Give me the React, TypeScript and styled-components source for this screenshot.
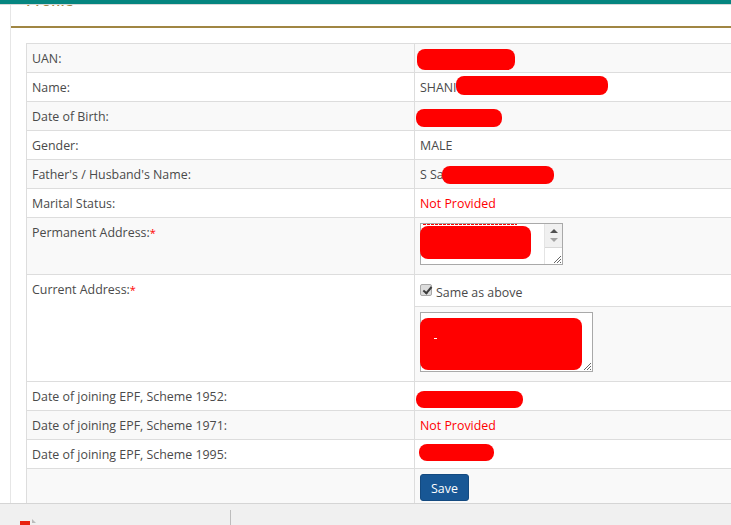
import React from "react";
import styled, { createGlobalStyle } from "styled-components";

const Global = createGlobalStyle`
  html, body { margin: 0; padding: 0; height: 100%; overflow: hidden; background: #fff; }
  body { font-family: "Open Sans", "Liberation Sans", sans-serif; font-size: 12.4px; color: #4a4a4a; }
`;
const Page = styled.div`
  height: 525px; width: 731px; display: flex; flex-direction: column; overflow: hidden;
`;
const TopBar = styled.div`
  height: 4px; flex: none; background: #058580; border-bottom: 1px solid #d8d8d8;
`;
const Main = styled.main`
  flex: 1; min-height: 0; overflow: hidden; padding-left: 10px;
`;
const Panel = styled.section`
  border-left: 1px solid #e6e6e6; height: 600px;
`;
const Heading = styled.h3`
  margin: -17px 0 0; padding-left: 15px; height: 38px; line-height: 24px;
  font-size: 15px; font-weight: 600; color: #a08643;
  border-bottom: 2px solid #a08643;
`;
const TableWrap = styled.div`
  padding: 15px 0 0 15px;
`;
const Table = styled.table`
  border-collapse: collapse; table-layout: fixed; width: 800px;
  border: 1px solid #ddd; line-height: 18px;
`;
const Row = styled.tr<{ $shade?: boolean }>`
  background: ${p => (p.$shade ? "#f9f9f9" : "#fff")};
`;
const LabelCell = styled.td`
  width: 377px; padding: 6px 5px 4px; border: 1px solid #ddd; vertical-align: top;
`;
const ValueCell = styled.td`
  position: relative; padding: 6px 5px 4px; border: 1px solid #ddd; vertical-align: top;
`;
const FlushCell = styled.td`
  padding: 0; border: 1px solid #ddd; vertical-align: top;
`;
const Nested = styled.table`
  border-collapse: collapse; width: 100%; line-height: 18px;
`;
const NestedCell = styled.td<{ $top?: boolean }>`
  position: relative; padding: 5px; vertical-align: top;
  ${p => (p.$top ? "" : "border-top: 1px solid #ddd;")}
`;
const Required = styled.span`color: #f00; font-size: 11px;`;
const NotProvided = styled.span`color: #f00;`;
const Redact = styled.i<{ $l: number; $t: number; $w: number; $h: number; $r?: number }>`
  position: absolute; left: ${p => p.$l}px; top: ${p => p.$t}px;
  width: ${p => p.$w}px; height: ${p => p.$h}px;
  background: #f00; border-radius: ${p => p.$r ?? 8}px;
`;
const Area = styled.div<{ $w: number; $h: number; $above: number; $below: number }>`
  position: relative; width: ${p => p.$w}px; height: ${p => p.$h}px;
  margin: ${p => p.$above}px 0 ${p => p.$below}px;
  box-sizing: border-box; border: 1px solid #a9a9a9; background: #fff;
`;
const Scroll = styled.div`
  position: absolute; right: 0; top: 0; bottom: 0; width: 17px;
  display: flex; flex-direction: column; border-left: 1px solid #e4e4e4;
`;
const ScrollTrack = styled.div`
  height: 23px; background: #f0f0f0; display: flex; flex-direction: column;
  align-items: center; justify-content: center; gap: 5px;
`;
const ScrollCorner = styled.div`flex: 1; border-top: 1px solid #d8d8d8; background: #fff;`;
const Arrow = styled.span<{ $down?: boolean }>`
  width: 0; height: 0; border-left: 4px solid transparent; border-right: 4px solid transparent;
  ${p => (p.$down ? "border-top: 4px solid #a3a3a3;" : "border-bottom: 4px solid #505050;")}
`;
const Grip = styled.svg`
  position: absolute; right: 0; bottom: 0; width: 10px; height: 10px;
`;
const Dots = styled.div`
  position: absolute; left: 2px; top: 0; width: 94px; height: 1px;
  background: repeating-linear-gradient(90deg, #f00 0 3px, #fff 3px 4px);
`;
const Speck = styled.i`
  position: absolute; left: 14px; top: 20px; width: 3px; height: 1px; background: #fff;
`;
const CheckLine = styled.label`
  display: flex; align-items: flex-start; gap: 4px; height: 21px;
`;
const Box = styled.input`
  appearance: none; margin: 4px 0 0; width: 12px; height: 12px; box-sizing: border-box;
  border: 1px solid #a8a8a8; border-radius: 2px; background: #dcdcdc; position: relative;
  &::before {
    content: ""; position: absolute; left: 3.5px; top: 0; width: 3px; height: 7px;
    border: solid #3c3c3c; border-width: 0 2px 2px 0; transform: rotate(40deg);
  }
`;
const BoxLabel = styled.span`padding-top: 4px;`;
const SaveButton = styled.button`
  display: block; width: 49px; height: 27px; padding: 1px 0 0; margin: -1px 0 0;
  background: #185795; color: #fff; border: 1px solid #144a80; border-radius: 3px;
  font: 12.4px "Open Sans", "Liberation Sans", sans-serif;
`;
const BottomBar = styled.footer`
  flex: none; height: 22px; background: #f0f0f0; border-top: 1px solid #d5d5d5;
  display: flex; overflow: hidden; box-sizing: border-box;
`;
const DownloadItem = styled.div`
  width: 231px; height: 22px; margin-top: 6px; border-right: 1px solid #bdbdbd; box-sizing: border-box;
  padding: 9px 0 0 20px;
`;
const FileIcon = styled.svg`display: block; width: 17px; height: 16px;`;

const GripIcon = () => (
  <Grip viewBox="0 0 10 10"><path d="M9 2 2 9M9 5 5 9M9 8 8 9" stroke="#666" fill="none" /></Grip>
);

export default function App() {
  return (
    <Page>
      <Global />
      <TopBar />
      <Main>
        <Panel>
          <Heading>Profile</Heading>
          <TableWrap>
            <Table>
              <tbody>
                <Row $shade><LabelCell>UAN:</LabelCell><ValueCell>&nbsp;<Redact $l={2} $t={5} $w={98} $h={21} /></ValueCell></Row>
                <Row><LabelCell>Name:</LabelCell><ValueCell>SHANI<Redact $l={41} $t={3} $w={152} $h={19} /></ValueCell></Row>
                <Row $shade><LabelCell>Date of Birth:</LabelCell><ValueCell>&nbsp;<Redact $l={1} $t={7} $w={86} $h={18} /></ValueCell></Row>
                <Row><LabelCell>Gender:</LabelCell><ValueCell>MALE</ValueCell></Row>
                <Row $shade><LabelCell>Father's / Husband's Name:</LabelCell><ValueCell>S Sa<Redact $l={27} $t={6} $w={112} $h={18} /></ValueCell></Row>
                <Row><LabelCell>Marital Status:</LabelCell><ValueCell><NotProvided>Not Provided</NotProvided></ValueCell></Row>
                <Row $shade>
                  <LabelCell>Permanent Address:<Required>*</Required></LabelCell>
                  <ValueCell>
                    <Area $w={143} $h={42} $above={-1} $below={5}>
                      <Dots />
                      <Redact $l={-1} $t={2} $w={111} $h={33} />
                      <Scroll>
                        <ScrollTrack><Arrow /><Arrow $down /></ScrollTrack>
                        <ScrollCorner />
                      </Scroll>
                      <GripIcon />
                    </Area>
                  </ValueCell>
                </Row>
                <Row>
                  <LabelCell>Current Address:<Required>*</Required></LabelCell>
                  <FlushCell>
                    <Nested>
                      <tbody>
                        <Row>
                          <NestedCell $top>
                            <CheckLine><Box type="checkbox" defaultChecked readOnly /><BoxLabel>Same as above</BoxLabel></CheckLine>
                          </NestedCell>
                        </Row>
                        <Row $shade>
                          <NestedCell>
                            <Area $w={173} $h={60} $above={0} $below={4}>
                              <Redact $l={-1} $t={5} $w={162} $h={52}><Speck /></Redact>
                              <GripIcon />
                            </Area>
                          </NestedCell>
                        </Row>
                      </tbody>
                    </Nested>
                  </FlushCell>
                </Row>
                <Row><LabelCell>Date of joining EPF, Scheme 1952:</LabelCell><ValueCell>&nbsp;<Redact $l={1} $t={9} $w={107} $h={17} /></ValueCell></Row>
                <Row $shade><LabelCell>Date of joining EPF, Scheme 1971:</LabelCell><ValueCell><NotProvided>Not Provided</NotProvided></ValueCell></Row>
                <Row><LabelCell>Date of joining EPF, Scheme 1995:</LabelCell><ValueCell>&nbsp;<Redact $l={4} $t={4} $w={75} $h={17} /></ValueCell></Row>
                <Row $shade><LabelCell>&nbsp;</LabelCell><ValueCell><SaveButton>Save</SaveButton></ValueCell></Row>
              </tbody>
            </Table>
          </TableWrap>
        </Panel>
      </Main>
      <BottomBar>
        <DownloadItem>
          <FileIcon viewBox="0 0 17 16"><path d="M0 2h10v14H0z" fill="#e8210f" /><path d="M12 0l4 4h-4z" fill="#bbb" /></FileIcon>
        </DownloadItem>
      </BottomBar>
    </Page>
  );
}
